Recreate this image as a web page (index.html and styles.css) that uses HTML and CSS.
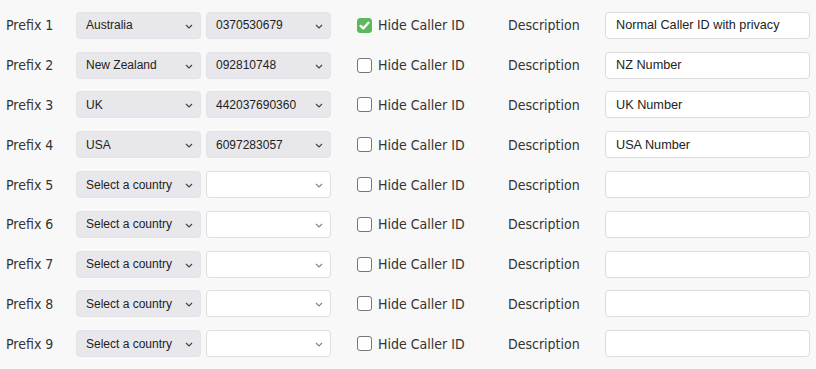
FILE: index.html
```html
<!DOCTYPE html>
<html>
<head>
<meta charset="utf-8">
<link rel="stylesheet" href="styles.css">
</head>
<body>
<div class="table">
  <div class="row">
    <span class="lbl">Prefix 1</span>
    <div class="sel country"><span>Australia</span><svg class="chev" viewBox="0 0 8 5"><path d="M1 1l3 3 3-3"/></svg></div>
    <div class="sel num"><span>0370530679</span><svg class="chev" viewBox="0 0 8 5"><path d="M1 1l3 3 3-3"/></svg></div>
    <label class="cb"><span class="box checked"><svg viewBox="0 0 15 15"><path d="M3.6 7.9l2.6 2.6 5.2-5.8"/></svg></span><span class="cbt">Hide Caller ID</span></label>
    <span class="lbl desc">Description</span>
    <div class="inp">Normal Caller ID with privacy</div>
  </div>
  <div class="row">
    <span class="lbl">Prefix 2</span>
    <div class="sel country"><span>New Zealand</span><svg class="chev" viewBox="0 0 8 5"><path d="M1 1l3 3 3-3"/></svg></div>
    <div class="sel num"><span>092810748</span><svg class="chev" viewBox="0 0 8 5"><path d="M1 1l3 3 3-3"/></svg></div>
    <label class="cb"><span class="box"></span><span class="cbt">Hide Caller ID</span></label>
    <span class="lbl desc">Description</span>
    <div class="inp">NZ Number</div>
  </div>
  <div class="row">
    <span class="lbl">Prefix 3</span>
    <div class="sel country"><span>UK</span><svg class="chev" viewBox="0 0 8 5"><path d="M1 1l3 3 3-3"/></svg></div>
    <div class="sel num"><span>442037690360</span><svg class="chev" viewBox="0 0 8 5"><path d="M1 1l3 3 3-3"/></svg></div>
    <label class="cb"><span class="box"></span><span class="cbt">Hide Caller ID</span></label>
    <span class="lbl desc">Description</span>
    <div class="inp">UK Number</div>
  </div>
  <div class="row">
    <span class="lbl">Prefix 4</span>
    <div class="sel country"><span>USA</span><svg class="chev" viewBox="0 0 8 5"><path d="M1 1l3 3 3-3"/></svg></div>
    <div class="sel num"><span>6097283057</span><svg class="chev" viewBox="0 0 8 5"><path d="M1 1l3 3 3-3"/></svg></div>
    <label class="cb"><span class="box"></span><span class="cbt">Hide Caller ID</span></label>
    <span class="lbl desc">Description</span>
    <div class="inp">USA Number</div>
  </div>
  <div class="row">
    <span class="lbl">Prefix 5</span>
    <div class="sel country"><span>Select a country</span><svg class="chev" viewBox="0 0 8 5"><path d="M1 1l3 3 3-3"/></svg></div>
    <div class="sel num empty"><span></span><svg class="chev" viewBox="0 0 8 5"><path d="M1 1l3 3 3-3"/></svg></div>
    <label class="cb"><span class="box"></span><span class="cbt">Hide Caller ID</span></label>
    <span class="lbl desc">Description</span>
    <div class="inp"></div>
  </div>
  <div class="row">
    <span class="lbl">Prefix 6</span>
    <div class="sel country"><span>Select a country</span><svg class="chev" viewBox="0 0 8 5"><path d="M1 1l3 3 3-3"/></svg></div>
    <div class="sel num empty"><span></span><svg class="chev" viewBox="0 0 8 5"><path d="M1 1l3 3 3-3"/></svg></div>
    <label class="cb"><span class="box"></span><span class="cbt">Hide Caller ID</span></label>
    <span class="lbl desc">Description</span>
    <div class="inp"></div>
  </div>
  <div class="row">
    <span class="lbl">Prefix 7</span>
    <div class="sel country"><span>Select a country</span><svg class="chev" viewBox="0 0 8 5"><path d="M1 1l3 3 3-3"/></svg></div>
    <div class="sel num empty"><span></span><svg class="chev" viewBox="0 0 8 5"><path d="M1 1l3 3 3-3"/></svg></div>
    <label class="cb"><span class="box"></span><span class="cbt">Hide Caller ID</span></label>
    <span class="lbl desc">Description</span>
    <div class="inp"></div>
  </div>
  <div class="row">
    <span class="lbl">Prefix 8</span>
    <div class="sel country"><span>Select a country</span><svg class="chev" viewBox="0 0 8 5"><path d="M1 1l3 3 3-3"/></svg></div>
    <div class="sel num empty"><span></span><svg class="chev" viewBox="0 0 8 5"><path d="M1 1l3 3 3-3"/></svg></div>
    <label class="cb"><span class="box"></span><span class="cbt">Hide Caller ID</span></label>
    <span class="lbl desc">Description</span>
    <div class="inp"></div>
  </div>
  <div class="row">
    <span class="lbl">Prefix 9</span>
    <div class="sel country"><span>Select a country</span><svg class="chev" viewBox="0 0 8 5"><path d="M1 1l3 3 3-3"/></svg></div>
    <div class="sel num empty"><span></span><svg class="chev" viewBox="0 0 8 5"><path d="M1 1l3 3 3-3"/></svg></div>
    <label class="cb"><span class="box"></span><span class="cbt">Hide Caller ID</span></label>
    <span class="lbl desc">Description</span>
    <div class="inp"></div>
  </div>
</div>
</body>
</html>
```

FILE: styles.css
```css
html, body {
  margin: 0;
  padding: 0;
  background: #f8f8f8;
}
.table {
  padding: 5.5px 0 0 6px;
}
.row {
  display: grid;
  grid-template-columns: 70px 125px 130px 177px 97px 205px;
  height: 39.8px;
  align-items: center;
}
.lbl, .cbt {
  font-family: "DejaVu Sans Condensed", "DejaVu Sans", Verdana, sans-serif;
  font-stretch: condensed;
  font-size: 14px;
  color: #333;
}
.sel {
  position: relative;
  box-sizing: border-box;
  height: 27px;
  border-radius: 4px;
  background: #e8e8ec;
  border: 1px solid #e3e3e7;
  font-family: "Liberation Sans", Arial, sans-serif;
  font-size: 12px;
  color: #222;
  display: flex;
  align-items: center;
  padding-left: 9px;
}
.sel.num {
  margin-left: 5px;
}
.sel.empty {
  background: #ffffff;
  border-color: #dedede;
}
.chev {
  position: absolute;
  right: 7px;
  top: 11px;
  width: 8px;
  height: 5px;
  fill: none;
  stroke: #444;
  stroke-width: 1.2;
}
.sel.empty .chev {
  stroke: #888;
}
.cb {
  display: flex;
  align-items: center;
  margin-left: 26px;
}
.box {
  box-sizing: border-box;
  width: 15px;
  height: 15px;
  border: 1px solid #767676;
  border-radius: 3px;
  background: #fff;
  display: flex;
  align-items: center;
  justify-content: center;
}
.box.checked {
  background: #5cb85c;
  border-color: #5cb85c;
}
.box svg {
  width: 15px;
  height: 15px;
  flex: none;
  fill: none;
  stroke: #fff;
  stroke-width: 2.4;
  stroke-linecap: round;
  stroke-linejoin: round;
}
.cbt {
  margin-left: 6px;
}
.inp {
  box-sizing: border-box;
  height: 27px;
  background: #fff;
  border: 1px solid #dcdcdc;
  border-radius: 4px;
  font-family: "Liberation Sans", Arial, sans-serif;
  font-size: 12.7px;
  color: #222;
  display: flex;
  align-items: center;
  padding-left: 10px;
}
```
